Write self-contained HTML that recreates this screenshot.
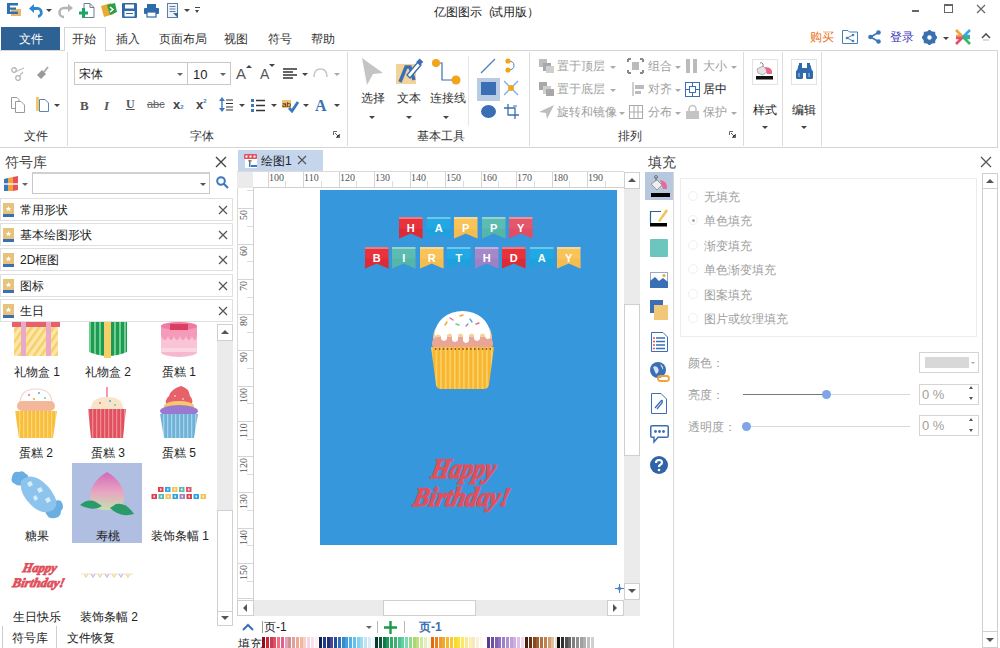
<!DOCTYPE html>
<html><head><meta charset="utf-8">
<style>
*{margin:0;padding:0;box-sizing:border-box}
html,body{width:1000px;height:648px;overflow:hidden;background:#fff;font-family:"Liberation Sans",sans-serif;font-size:12px;color:#333}
.a{position:absolute}
.t{position:absolute;white-space:nowrap;line-height:1}
.vl{position:absolute;width:1px;background:#dcdcdc}
.hl{position:absolute;height:1px;background:#dcdcdc}
.g{color:#a0a0a0}
.arr{position:absolute;width:0;height:0;border-left:3px solid transparent;border-right:3px solid transparent;border-top:3px solid #444}
.arrg{position:absolute;width:0;height:0;border-left:3px solid transparent;border-right:3px solid transparent;border-top:3px solid #aaa}
svg{position:absolute;overflow:visible}
</style></head><body>

<!-- ===== TITLE BAR ===== -->
<!-- app logo -->
<svg style="left:6px;top:3px" width="16" height="13" viewBox="0 0 16 13">
<rect x="5" y="6" width="10" height="7" fill="#eab66a"/>
<rect x="1" y="0" width="11" height="2.5" fill="#2f6fb5"/>
<rect x="1" y="0" width="3" height="11" fill="#2f6fb5"/>
<rect x="1" y="4.5" width="9" height="2.2" fill="#2f6fb5"/>
<rect x="1" y="8.6" width="11" height="2.4" fill="#2f6fb5"/>
</svg>
<!-- undo -->
<svg style="left:29px;top:4px" width="14" height="13" viewBox="0 0 14 13">
<path d="M2 4.5 H7.5 A4 4 0 0 1 9 12.5" fill="none" stroke="#2c86d0" stroke-width="2.8"/>
<path d="M0 4.5 L5 0 L5 9 Z" fill="#2c86d0"/>
</svg>
<div class="arr" style="left:46px;top:9px"></div>
<!-- redo -->
<svg style="left:58px;top:4px" width="15" height="13" viewBox="0 0 15 13">
<path d="M12 4 H6 A4.5 4.5 0 0 0 6 13" fill="none" stroke="#b5b5b5" stroke-width="2.6"/>
<path d="M15 4 L10 0 L10 8 Z" fill="#b5b5b5"/>
</svg>
<!-- new -->
<svg style="left:79px;top:3px" width="16" height="15" viewBox="0 0 16 15">
<path d="M5 .5 H11 L15 4.5 V14.5 H5 Z" fill="#fff" stroke="#6d7f8f" stroke-width="1"/>
<path d="M11 .5 V4.5 H15" fill="none" stroke="#6d7f8f"/>
<rect x="3" y="5" width="3" height="10" fill="#1aa664"/>
<rect x="0" y="8.5" width="9" height="3" fill="#1aa664"/>
</svg>
<!-- open -->
<svg style="left:101px;top:3px" width="16" height="14" viewBox="0 0 16 14">
<path d="M0 3 L10 0 L13 11 L3 14 Z" fill="#e8a935"/>
<path d="M6 2 L14 0 L16 9 L9 12 Z" fill="#2aa04a"/>
<path d="M9 4 L12 6.5 L9 9" fill="none" stroke="#fff" stroke-width="1.5"/>
</svg>
<!-- save -->
<svg style="left:122px;top:3px" width="15" height="15" viewBox="0 0 15 15">
<rect x="0" y="0" width="15" height="15" rx="1" fill="#2f6aaa"/>
<rect x="3" y="1.5" width="9" height="4" fill="#fff"/>
<rect x="2.5" y="8" width="10" height="5.5" fill="#fff"/>
<rect x="4" y="10" width="7" height="1" fill="#2f6aaa"/>
</svg>
<!-- print -->
<svg style="left:144px;top:4px" width="15" height="13" viewBox="0 0 15 13">
<rect x="3" y="0" width="9" height="4" fill="#2f6aaa"/>
<rect x="0" y="4" width="15" height="6" rx="1" fill="#2f6aaa"/>
<rect x="3" y="8" width="9" height="5" fill="#fff" stroke="#2f6aaa" stroke-width="1.2"/>
</svg>
<!-- doc -->
<svg style="left:167px;top:3px" width="12" height="15" viewBox="0 0 12 15">
<rect x=".5" y=".5" width="10" height="14" fill="#eef3f9" stroke="#5c7fa5"/>
<rect x="2.5" y="3" width="6" height="1" fill="#5c7fa5"/>
<rect x="2.5" y="5.5" width="6" height="1" fill="#5c7fa5"/>
<rect x="2.5" y="8" width="6" height="1" fill="#5c7fa5"/>
<path d="M6 10 L11 10 L11 15 Z" fill="#2f6aaa"/>
</svg>
<div class="arr" style="left:184px;top:9px"></div>
<div class="a" style="left:195px;top:7px;width:5px;height:1px;background:#444"></div>
<div class="arr" style="left:195px;top:10px;border-left-width:2.5px;border-right-width:2.5px"></div>

<div class="t" style="left:434px;top:6px;font-size:12px;color:#222">亿图图示<span style="letter-spacing:-3px">（</span>试用版<span style="letter-spacing:-3px">）</span></div>
<div class="a" style="left:912px;top:10px;width:7px;height:2px;background:#666"></div>
<div class="a" style="left:944px;top:4px;width:9px;height:9px;border:1px solid #666;border-top-width:2px"></div>
<svg style="left:977px;top:5px" width="8" height="8" viewBox="0 0 8 8"><path d="M0 0 L8 8 M8 0 L0 8" stroke="#666" stroke-width="1.2"/></svg>

<!-- ===== TAB ROW ===== -->
<div class="a" style="left:1px;top:27px;width:59px;height:23px;background:#2f6294"></div>
<div class="t" style="left:19px;top:33px;color:#fff">文件</div>
<div class="a" style="left:64px;top:27px;width:42px;height:24px;background:#fff;border:1px solid #d5d5d5;border-bottom:none;z-index:2"></div>
<div class="t" style="left:72px;top:33px;color:#333;z-index:3">开始</div>
<div class="t" style="left:116px;top:33px">插入</div>
<div class="t" style="left:159px;top:33px">页面布局</div>
<div class="t" style="left:224px;top:33px">视图</div>
<div class="t" style="left:268px;top:33px">符号</div>
<div class="t" style="left:311px;top:33px">帮助</div>
<div class="t" style="left:810px;top:31px;color:#e8741a">购买</div>
<svg style="left:842px;top:30px" width="16" height="14" viewBox="0 0 16 14">
<path d="M.5 .5 H6 L7.5 2 H15.5 V13.5 H.5 Z" fill="none" stroke="#4a7fb5"/>
<circle cx="5" cy="8" r="1.3" fill="#4a7fb5"/><circle cx="11" cy="5" r="1.3" fill="#4a7fb5"/><circle cx="11" cy="11" r="1.3" fill="#4a7fb5"/>
<path d="M5 8 L11 5 M5 8 L11 11" stroke="#4a7fb5"/>
</svg>
<svg style="left:868px;top:30px" width="13" height="14" viewBox="0 0 13 14">
<circle cx="2.5" cy="7" r="2.3" fill="#3a78b8"/><circle cx="10.5" cy="2.5" r="2.3" fill="#3a78b8"/><circle cx="10.5" cy="11.5" r="2.3" fill="#3a78b8"/>
<path d="M2.5 7 L10.5 2.5 M2.5 7 L10.5 11.5" stroke="#3a78b8" stroke-width="1.6"/>
</svg>
<div class="t" style="left:890px;top:31px;color:#3b3bb5">登录</div>
<svg style="left:922px;top:30px" width="15" height="15" viewBox="0 0 15 15">
<circle cx="7.5" cy="7.5" r="5" fill="none" stroke="#3a6fb0" stroke-width="3.5"/>
<path d="M7.5 0 V15 M0 7.5 H15 M2.2 2.2 L12.8 12.8 M12.8 2.2 L2.2 12.8" stroke="#3a6fb0" stroke-width="2.4"/>
<circle cx="7.5" cy="7.5" r="2.2" fill="#fff"/>
</svg>
<div class="arr" style="left:943px;top:37px"></div>
<svg style="left:955px;top:29px" width="16" height="16" viewBox="0 0 16 16">
<path d="M1 1 L7 7 L1 7" fill="none" stroke="#f2a33a" stroke-width="2.6"/>
<path d="M15 1 L9 7 L15 7" fill="none" stroke="#3aa7e0" stroke-width="2.6"/>
<path d="M1 15 L7 9 L1 9" fill="none" stroke="#e84c6a" stroke-width="2.6"/>
<path d="M15 15 L9 9 L15 9" fill="none" stroke="#3cb371" stroke-width="2.6"/>
</svg>
<svg style="left:981px;top:33px" width="10" height="8" viewBox="0 0 10 8">
<path d="M1 5 L5 1 L9 5" fill="none" stroke="#555" stroke-width="1.6"/><path d="M2 7 L8 7" stroke="#bbb"/>
</svg>
<!-- ===== RIBBON ===== -->
<div class="a" style="left:0;top:50px;width:998px;height:98px;background:#fff;border:1px solid #d5d5d5;border-left:none"></div>
<div class="vl" style="left:67px;top:52px;height:94px"></div>
<div class="vl" style="left:347px;top:52px;height:94px"></div>
<div class="vl" style="left:529px;top:52px;height:94px"></div>
<div class="vl" style="left:743px;top:52px;height:94px"></div>
<div class="vl" style="left:782px;top:52px;height:94px"></div>
<div class="vl" style="left:821px;top:52px;height:94px"></div>
<div class="vl" style="left:468px;top:56px;height:70px;background:#e6e6e6"></div>
<div class="t" style="left:24px;top:130px">文件</div>
<div class="t" style="left:190px;top:130px">字体</div>
<div class="t" style="left:417px;top:130px">基本工具</div>
<div class="t" style="left:618px;top:130px">排列</div>
<!-- launchers -->
<svg style="left:333px;top:131px" width="7" height="7" viewBox="0 0 7 7"><path d="M.5 .5 H4 M.5 .5 V4" stroke="#666"/><path d="M2 2 L6.5 6.5 M3 6.5 H6.5 V3" stroke="#666"/></svg>
<svg style="left:729px;top:131px" width="7" height="7" viewBox="0 0 7 7"><path d="M.5 .5 H4 M.5 .5 V4" stroke="#666"/><path d="M2 2 L6.5 6.5 M3 6.5 H6.5 V3" stroke="#666"/></svg>

<!-- file group icons -->
<svg style="left:11px;top:67px" width="15" height="14" viewBox="0 0 15 14">
<circle cx="3" cy="3" r="2.3" fill="none" stroke="#b0b0b0" stroke-width="1.2"/>
<circle cx="7" cy="11" r="2.3" fill="none" stroke="#b0b0b0" stroke-width="1.2"/>
<path d="M5 4.5 L13 1 M8.5 9 L12 5" stroke="#c0c0c0" stroke-width="1.3"/>
</svg>
<svg style="left:35px;top:67px" width="14" height="13" viewBox="0 0 14 13">
<path d="M9 5 L13 0" stroke="#aaa" stroke-width="2"/><path d="M2 8 L7 3 L11 7 L6 12 Z" fill="#999"/>
</svg>
<svg style="left:11px;top:97px" width="15" height="16" viewBox="0 0 15 16">
<path d="M.5 .5 H6 L8 2.5 V11.5 H.5 Z" fill="#fff" stroke="#9a9a9a"/>
<path d="M4.5 4.5 H10 L13.5 8 V15.5 H4.5 Z" fill="#fff" stroke="#9a9a9a"/>
</svg>
<svg style="left:36px;top:96px" width="14" height="16" viewBox="0 0 14 16">
<rect x="0" y="1" width="3" height="14" fill="#f0c870"/>
<path d="M3.5 3.5 H9 L12.5 7 V15.5 H3.5 Z" fill="#fff" stroke="#5c84b5"/>
</svg>
<div class="arr" style="left:54px;top:104px"></div>

<!-- font group -->
<div class="a" style="left:74px;top:62px;width:157px;height:23px;border:1px solid #c8c8c8;background:#fff"></div>
<div class="vl" style="left:187px;top:62px;height:23px;background:#c8c8c8"></div>
<div class="t" style="left:79px;top:68px;color:#222">宋体</div>
<div class="t" style="left:193px;top:68px;color:#222;font-size:13px">10</div>
<div class="arr" style="left:177px;top:73px;border-top-color:#666"></div>
<div class="arr" style="left:220px;top:73px;border-top-color:#666"></div>
<div class="t" style="left:236px;top:66px;font-size:15px;color:#555">A</div>
<div class="arr" style="left:246px;top:65px;border-top:none;border-bottom:3px solid #444"></div>
<div class="t" style="left:260px;top:67px;font-size:14px;color:#555">A</div>
<div class="arr" style="left:269px;top:64px"></div>
<svg style="left:283px;top:68px" width="14" height="12" viewBox="0 0 14 12">
<path d="M0 1 H14 M0 4 H10 M0 7 H14 M0 10 H10" stroke="#333" stroke-width="1.3"/>
</svg>
<div class="arr" style="left:302px;top:73px"></div>
<svg style="left:313px;top:68px" width="15" height="10" viewBox="0 0 15 10">
<path d="M1 9 Q1 1 7.5 1 Q14 1 14 9" fill="none" stroke="#c8c8c8" stroke-width="1.6"/>
</svg>
<div class="arrg" style="left:334px;top:73px"></div>
<!-- row 2 -->
<div class="t" style="left:80px;top:98px;font:bold 13px 'Liberation Serif',serif;color:#555">B</div>
<div class="t" style="left:104px;top:98px;font:italic bold 13px 'Liberation Serif',serif;color:#555">I</div>
<div class="t" style="left:126px;top:97px;font:bold 12px 'Liberation Serif',serif;color:#555;text-decoration:underline">U</div>
<div class="t" style="left:147px;top:99px;font-size:11px;color:#666;text-decoration:line-through">abc</div>
<div class="t" style="left:173px;top:98px;font-size:13px;font-weight:bold;color:#444">x<span style="font-size:6px;color:#4a7fb5">2</span></div>
<div class="t" style="left:196px;top:98px;font-size:13px;font-weight:bold;color:#444">x<span style="font-size:6px;vertical-align:6px;color:#4a7fb5">2</span></div>
<svg style="left:219px;top:97px" width="14" height="15" viewBox="0 0 14 15">
<path d="M3 2 V13" stroke="#3a78c0" stroke-width="1.4"/><path d="M0 4 L3 0 L6 4 Z M0 11 L3 15 L6 11 Z" fill="#3a78c0"/>
<path d="M7 3 H14 M7 6.5 H14 M7 10 H14 M7 13 H14" stroke="#333" stroke-width="1.2"/>
</svg>
<div class="arr" style="left:239px;top:104px"></div>
<svg style="left:251px;top:99px" width="14" height="13" viewBox="0 0 14 13">
<rect x="0" y="0" width="3" height="3" fill="#3a78c0"/><rect x="0" y="5" width="3" height="3" fill="#3a78c0"/><rect x="0" y="10" width="3" height="3" fill="#3a78c0"/>
<path d="M5 1.5 H14 M5 6.5 H14 M5 11.5 H14" stroke="#333" stroke-width="1.3"/>
</svg>
<div class="arr" style="left:271px;top:104px"></div>
<svg style="left:282px;top:99px" width="16" height="13" viewBox="0 0 16 13">
<rect x="0" y="1" width="9" height="8" fill="#f5c36a"/>
<text x="0" y="8" font-size="8" font-family="Liberation Sans" fill="#222">ab</text>
<path d="M7 9 L10 12 L16 3" fill="none" stroke="#3a78c0" stroke-width="2.8"/>
</svg>
<div class="arr" style="left:303px;top:104px"></div>
<div class="t" style="left:315px;top:97px;font:bold 16px 'Liberation Serif',serif;color:#3a6fb5">A</div>
<div class="arr" style="left:334px;top:104px"></div>

<!-- basic tools -->
<svg style="left:361px;top:58px" width="23" height="28" viewBox="0 0 23 28">
<path d="M1 0 L22 15 L12 16 L6 27 Z" fill="#c4c4c4"/>
</svg>
<div class="t" style="left:361px;top:92px">选择</div>
<div class="arr" style="left:369px;top:116px"></div>
<svg style="left:396px;top:59px" width="26" height="26" viewBox="0 0 26 26">
<rect x="0" y="5" width="20" height="20" fill="#f2d49a"/>
<path d="M4 23 L10 8 L14 8 L18 21" fill="none" stroke="#3a6fb5" stroke-width="3.5"/>
<path d="M11 16 L22 3 L25 6 L14 19 Z" fill="#fff" stroke="#3a6fb5" stroke-width="1.4"/>
<rect x="21" y="0" width="5" height="5" transform="rotate(45 23 3)" fill="#3a6fb5"/>
</svg>
<div class="t" style="left:397px;top:92px">文本</div>
<div class="arr" style="left:406px;top:116px"></div>
<svg style="left:432px;top:59px" width="29" height="26" viewBox="0 0 29 26">
<path d="M4 4 H10 V21 H24" fill="none" stroke="#3a6fb5" stroke-width="1.2"/>
<circle cx="4" cy="4" r="4" fill="#f2a51a"/><circle cx="24" cy="21" r="4.5" fill="#f2a51a"/>
</svg>
<div class="t" style="left:430px;top:92px">连接线</div>
<div class="arr" style="left:443px;top:116px"></div>
<svg style="left:480px;top:58px" width="16" height="16" viewBox="0 0 16 16"><path d="M1 15 L15 1" stroke="#4a7fc0" stroke-width="1.3"/></svg>
<svg style="left:505px;top:58px" width="11" height="15" viewBox="0 0 11 15">
<path d="M3 3 Q9 3 9 7.5 Q9 12 3 12" fill="none" stroke="#4a7fc0" stroke-width="1"/>
<circle cx="3" cy="3" r="2.6" fill="#f2a51a"/><circle cx="3" cy="12" r="2.6" fill="#f2a51a"/>
</svg>
<div class="a" style="left:477px;top:78px;width:23px;height:23px;background:#b9cce3"></div>
<div class="a" style="left:481px;top:82px;width:15px;height:13px;background:#3a6fb5"></div>
<svg style="left:503px;top:80px" width="16" height="16" viewBox="0 0 16 16">
<path d="M1 1 L15 15 M15 1 L1 15" stroke="#7ab0e0" stroke-width="1.3"/><circle cx="8" cy="8" r="3" fill="#f2a51a"/>
</svg>
<div class="a" style="left:481px;top:105px;width:15px;height:13px;border-radius:50%;background:#3a6fb5"></div>
<svg style="left:504px;top:104px" width="15" height="15" viewBox="0 0 15 15">
<path d="M4 0 V11 H15 M0 4 H11 V15" fill="none" stroke="#3a6fb5" stroke-width="1.3"/>
<path d="M9 2 L13 2" stroke="#3a6fb5"/>
</svg>

<!-- arrange group -->
<svg style="left:539px;top:59px" width="15" height="14" viewBox="0 0 15 14">
<rect x="0" y="0" width="8" height="8" fill="#bdbdbd"/><rect x="4" y="4" width="8" height="8" fill="#a8a8a8"/><rect x="7" y="7" width="8" height="7" fill="#cfcfcf"/>
</svg>
<div class="t g" style="left:557px;top:60px">置于顶层</div><div class="arrg" style="left:610px;top:66px"></div>
<svg style="left:539px;top:82px" width="15" height="14" viewBox="0 0 15 14">
<rect x="0" y="0" width="8" height="8" fill="#a8a8a8"/><rect x="4" y="4" width="8" height="8" fill="#cfcfcf"/><rect x="7" y="7" width="8" height="7" fill="#a8a8a8"/>
</svg>
<div class="t g" style="left:557px;top:83px">置于底层</div><div class="arrg" style="left:610px;top:89px"></div>
<svg style="left:539px;top:105px" width="15" height="14" viewBox="0 0 15 14"><path d="M0 7 L15 0 L8 14 L7 8 Z" fill="#bdbdbd"/></svg>
<div class="t g" style="left:557px;top:106px">旋转和镜像</div><div class="arrg" style="left:619px;top:112px"></div>
<svg style="left:628px;top:59px" width="15" height="14" viewBox="0 0 15 14">
<rect x="4" y="3" width="7" height="8" fill="#bbb"/>
<path d="M0 0 H3 M0 0 V3 M15 0 H12 M15 0 V3 M0 14 H3 M0 14 V11 M15 14 H12 M15 14 V11" stroke="#888" stroke-width="2"/>
</svg>
<div class="t g" style="left:648px;top:60px">组合</div><div class="arrg" style="left:675px;top:66px"></div>
<svg style="left:632px;top:82px" width="12" height="14" viewBox="0 0 12 14"><path d="M1 0 V14" stroke="#bbb" stroke-width="1.4"/><rect x="3" y="3" width="9" height="4" fill="#bbb"/><rect x="3" y="9" width="6" height="3" fill="#bbb"/></svg>
<div class="t g" style="left:648px;top:83px">对齐</div><div class="arrg" style="left:675px;top:89px"></div>
<svg style="left:629px;top:105px" width="14" height="14" viewBox="0 0 14 14"><rect x=".5" y=".5" width="13" height="13" fill="none" stroke="#aaa"/><path d="M5 0 V14 M9 0 V14 M0 7 H14" stroke="#aaa"/></svg>
<div class="t g" style="left:648px;top:106px">分布</div><div class="arrg" style="left:675px;top:112px"></div>
<svg style="left:686px;top:59px" width="12" height="14" viewBox="0 0 12 14"><rect x="0" y="0" width="4" height="14" fill="#bbb"/><rect x="7" y="0" width="4" height="14" fill="#bbb"/></svg>
<div class="t g" style="left:703px;top:60px">大小</div><div class="arrg" style="left:731px;top:66px"></div>
<svg style="left:685px;top:82px" width="15" height="15" viewBox="0 0 15 15"><rect x=".5" y=".5" width="14" height="14" fill="none" stroke="#3a6fb5"/><rect x="4.5" y="4.5" width="6" height="6" fill="none" stroke="#3a6fb5"/><path d="M7.5 0 V4 M7.5 11 V15 M0 7.5 H4 M11 7.5 H15" stroke="#3a6fb5"/></svg>
<div class="t" style="left:703px;top:83px;color:#222">居中</div>
<svg style="left:686px;top:105px" width="13" height="14" viewBox="0 0 13 14"><path d="M3 7 V4 A3.5 3.5 0 0 1 10 4 V7" fill="none" stroke="#c4c4c4" stroke-width="1.6"/><rect x="0" y="6" width="13" height="8" fill="#c4c4c4"/></svg>
<div class="t g" style="left:703px;top:106px">保护</div><div class="arrg" style="left:731px;top:112px"></div>

<!-- style / edit -->
<div class="a" style="left:752px;top:59px;width:26px;height:26px;border:1px solid #e2e2e2;background:#fff"></div>
<svg style="left:755px;top:63px" width="20" height="17" viewBox="0 0 20 17">
<path d="M5 0 Q7 -1 8 1 L8 4" fill="none" stroke="#888" stroke-width="1"/>
<path d="M2 6 L8 3 L13 8 L8 12 L3 10 Z" fill="#e4e4e4" stroke="#999" stroke-width=".8"/>
<path d="M10 4 Q18 4 17 11 L12 11 Z" fill="#e86a8a"/>
<rect x="1" y="13" width="17" height="3.5" fill="#111"/>
</svg>
<div class="t" style="left:753px;top:104px;color:#222">样式</div>
<div class="arr" style="left:762px;top:126px"></div>
<div class="a" style="left:791px;top:59px;width:26px;height:26px;border:1px solid #e2e2e2;background:#fff"></div>
<svg style="left:796px;top:63px" width="17" height="16" viewBox="0 0 17 16">
<path d="M1 8 L2.5 2 H6 V8 Z M11 8 V2 H14.5 L16 8 Z" fill="#2f6aaa"/>
<rect x="0" y="7" width="7" height="9" rx="1.5" fill="#2f6aaa"/><rect x="10" y="7" width="7" height="9" rx="1.5" fill="#2f6aaa"/>
<rect x="6" y="5" width="5" height="5" fill="#2f6aaa"/>
<rect x="2" y="10" width="2" height="4" fill="#6a9ad0"/><rect x="12" y="10" width="2" height="4" fill="#6a9ad0"/>
<rect x="3" y="0" width="3" height="2" fill="#2f6aaa"/><rect x="11" y="0" width="3" height="2" fill="#2f6aaa"/>
</svg>
<div class="t" style="left:792px;top:104px;color:#222">编辑</div>
<div class="arr" style="left:801px;top:126px"></div>
<!-- ===== LEFT PANEL ===== -->
<div class="t" style="left:5px;top:155px;font-size:14px;color:#444">符号库</div>
<svg style="left:216px;top:157px" width="10" height="10" viewBox="0 0 10 10"><path d="M0 0 L10 10 M10 0 L0 10" stroke="#444" stroke-width="1.4"/></svg>
<svg style="left:4px;top:176px" width="14" height="15" viewBox="0 0 14 15">
<path d="M0 3 L4 2 V15 L0 15 Z" fill="#3a78c0"/><path d="M4 2 L9 1 V15 H4 Z" fill="#f2a33a"/><path d="M9 1 L14 0 V14 L9 15 Z" fill="#e8505a"/>
<rect x="0" y="7" width="14" height="2" fill="#fff" opacity=".7"/>
</svg>
<div class="arr" style="left:22px;top:183px;border-top-color:#666"></div>
<div class="a" style="left:32px;top:172px;width:178px;height:22px;border:1px solid #c8c8c8;border-top:2px solid #d0d0d0;background:#fff"></div>
<div class="arr" style="left:200px;top:183px;border-top-color:#555"></div>
<svg style="left:216px;top:176px" width="13" height="13" viewBox="0 0 13 13"><circle cx="5" cy="5" r="3.8" fill="none" stroke="#3a78c0" stroke-width="2"/><path d="M8 8 L12 12" stroke="#3a78c0" stroke-width="2.2"/></svg>

<!-- categories -->
<div class="a" style="left:0;top:198px;width:233px;height:23px;border:1px solid #e0e0e0;background:#fff"></div>
<div class="a" style="left:0;top:223px;width:233px;height:23px;border:1px solid #e0e0e0;background:#fff"></div>
<div class="a" style="left:0;top:248px;width:233px;height:23px;border:1px solid #e0e0e0;background:#fff"></div>
<div class="a" style="left:0;top:274px;width:233px;height:23px;border:1px solid #e0e0e0;background:#fff"></div>
<div class="a" style="left:0;top:299px;width:233px;height:23px;border:1px solid #e0e0e0;background:#fff"></div>

<svg style="left:3px;top:203px" width="12" height="14" viewBox="0 0 12 14"><rect x="0" y="0" width="11" height="11" fill="#e6c27a"/><rect x="0" y="11" width="11" height="3" fill="#3a6fb5"/><path d="M5.5 3 L6.3 5 L8.3 5 L6.7 6.2 L7.3 8.2 L5.5 7 L3.7 8.2 L4.3 6.2 L2.7 5 L4.7 5 Z" fill="#fff"/></svg>
<svg style="left:3px;top:228px" width="12" height="14" viewBox="0 0 12 14"><rect x="0" y="0" width="11" height="11" fill="#e6c27a"/><rect x="0" y="11" width="11" height="3" fill="#3a6fb5"/><path d="M5.5 3 L6.3 5 L8.3 5 L6.7 6.2 L7.3 8.2 L5.5 7 L3.7 8.2 L4.3 6.2 L2.7 5 L4.7 5 Z" fill="#fff"/></svg>
<svg style="left:3px;top:253px" width="12" height="14" viewBox="0 0 12 14"><rect x="0" y="0" width="11" height="11" fill="#e6c27a"/><rect x="0" y="11" width="11" height="3" fill="#3a6fb5"/><path d="M5.5 3 L6.3 5 L8.3 5 L6.7 6.2 L7.3 8.2 L5.5 7 L3.7 8.2 L4.3 6.2 L2.7 5 L4.7 5 Z" fill="#fff"/></svg>
<svg style="left:3px;top:279px" width="12" height="14" viewBox="0 0 12 14"><rect x="0" y="0" width="11" height="11" fill="#e6c27a"/><rect x="0" y="11" width="11" height="3" fill="#3a6fb5"/><path d="M5.5 3 L6.3 5 L8.3 5 L6.7 6.2 L7.3 8.2 L5.5 7 L3.7 8.2 L4.3 6.2 L2.7 5 L4.7 5 Z" fill="#fff"/></svg>
<svg style="left:3px;top:304px" width="12" height="14" viewBox="0 0 12 14"><rect x="0" y="0" width="11" height="11" fill="#e6c27a"/><rect x="0" y="11" width="11" height="3" fill="#3a6fb5"/><path d="M5.5 3 L6.3 5 L8.3 5 L6.7 6.2 L7.3 8.2 L5.5 7 L3.7 8.2 L4.3 6.2 L2.7 5 L4.7 5 Z" fill="#fff"/></svg>

<div class="t" style="left:20px;top:204px;color:#222">常用形状</div>
<div class="t" style="left:20px;top:229px;color:#222">基本绘图形状</div>
<div class="t" style="left:20px;top:254px;color:#222">2D框图</div>
<div class="t" style="left:20px;top:280px;color:#222">图标</div>
<div class="t" style="left:20px;top:305px;color:#222">生日</div>
<svg style="left:219px;top:206px" width="8" height="8" viewBox="0 0 8 8"><path d="M0 0 L8 8 M8 0 L0 8" stroke="#555" stroke-width="1.2"/></svg>
<svg style="left:219px;top:231px" width="8" height="8" viewBox="0 0 8 8"><path d="M0 0 L8 8 M8 0 L0 8" stroke="#555" stroke-width="1.2"/></svg>
<svg style="left:219px;top:256px" width="8" height="8" viewBox="0 0 8 8"><path d="M0 0 L8 8 M8 0 L0 8" stroke="#555" stroke-width="1.2"/></svg>
<svg style="left:219px;top:282px" width="8" height="8" viewBox="0 0 8 8"><path d="M0 0 L8 8 M8 0 L0 8" stroke="#555" stroke-width="1.2"/></svg>
<svg style="left:219px;top:307px" width="8" height="8" viewBox="0 0 8 8"><path d="M0 0 L8 8 M8 0 L0 8" stroke="#555" stroke-width="1.2"/></svg>

<!-- left scrollbar -->
<div class="a" style="left:217px;top:324px;width:16px;height:302px;background:#ebebeb"></div>
<div class="a" style="left:217px;top:324px;width:16px;height:17px;background:#fff;border:1px solid #d0d0d0"></div>
<div class="arr" style="left:221px;top:330px;border-left-width:4px;border-right-width:4px;border-top:none;border-bottom:4px solid #555"></div>
<div class="a" style="left:217px;top:510px;width:16px;height:102px;background:#fff;border:1px solid #d0d0d0"></div>
<div class="a" style="left:217px;top:611px;width:16px;height:15px;background:#fff;border:1px solid #d0d0d0"></div>
<div class="arr" style="left:221px;top:616px;border-left-width:4px;border-right-width:4px;border-top-width:4px;border-top-color:#555"></div>

<!-- gallery -->
<div class="a" style="left:72px;top:463px;width:70px;height:80px;background:#b0bee1"></div>

<!-- gift 1 -->
<svg style="left:12px;top:322px" width="48" height="34" viewBox="0 0 48 34">
<defs><pattern id="st1" width="6" height="6" patternUnits="userSpaceOnUse" patternTransform="rotate(35)"><rect width="6" height="6" fill="#fde7a8"/><rect width="2.5" height="6" fill="#f5cf6a"/></pattern></defs>
<rect x="2" y="4" width="44" height="30" fill="url(#st1)"/>
<rect x="0" y="0" width="48" height="5" fill="#e8606a"/>
<rect x="9" y="0" width="5" height="34" fill="#e9a9c8"/><rect x="34" y="0" width="5" height="34" fill="#e9a9c8"/>
</svg>
<!-- gift 2 -->
<svg style="left:89px;top:322px" width="38" height="36" viewBox="0 0 38 36">
<defs><pattern id="st2" width="5" height="5" patternUnits="userSpaceOnUse"><rect width="5" height="5" fill="#1f9a55"/><rect width="2" height="5" fill="#6fcf8e"/></pattern></defs>
<path d="M0 0 H38 V30 Q19 38 0 30 Z" fill="url(#st2)"/>
<rect x="15" y="0" width="7" height="36" fill="#f5cf6a"/>
</svg>
<!-- cake 1 -->
<svg style="left:160px;top:322px" width="38" height="36" viewBox="0 0 38 36">
<ellipse cx="19" cy="30" rx="18" ry="5" fill="#f6b8cf"/>
<rect x="1" y="4" width="36" height="26" fill="#f59ab8"/>
<path d="M1 14 Q5 22 8 14 Q11 22 14 14 Q17 22 20 14 Q23 22 26 14 Q29 22 32 14 Q35 22 37 14 V30 H1 Z" fill="#f8c4d6"/>
<ellipse cx="19" cy="4" rx="18" ry="4" fill="#f07aa3"/>
<rect x="10" y="2" width="18" height="6" fill="#d9405f"/>
<rect x="1" y="26" width="36" height="4" fill="#fbd5e2"/>
</svg>
<div class="t" style="left:14px;top:366px;color:#222">礼物盒 1</div>
<div class="t" style="left:85px;top:366px;color:#222">礼物盒 2</div>
<div class="t" style="left:162px;top:366px;color:#222">蛋糕 1</div>

<!-- cupcakes row -->
<svg style="left:15px;top:387px" width="42" height="52" viewBox="0 0 42 52">
<defs><pattern id="cy" width="4" height="10" patternUnits="userSpaceOnUse"><rect width="4" height="10" fill="#f9be3a"/><rect width="1.3" height="10" fill="#fcd67a"/></pattern></defs>
<path d="M5 17 Q5 2 21 2 Q37 2 37 17 Z" fill="#fff" stroke="#f0d8c8" stroke-width="1.2"/>
<rect x="2" y="14" width="38" height="10" rx="5" fill="#f3b89a"/>
<path d="M0 24 H42 L38 51 H4 Z" fill="url(#cy)"/>
<circle cx="14" cy="8" r="1" fill="#e86a8a"/><circle cx="24" cy="6" r="1" fill="#4ab0e0"/><circle cx="30" cy="11" r="1" fill="#6fcf8e"/><circle cx="19" cy="12" r="1" fill="#f2a33a"/>
</svg>
<svg style="left:88px;top:387px" width="38" height="52" viewBox="0 0 38 52">
<defs><pattern id="cr" width="4" height="10" patternUnits="userSpaceOnUse"><rect width="4" height="10" fill="#e0505e"/><rect width="1.3" height="10" fill="#ee8a94"/></pattern></defs>
<rect x="18" y="0" width="2" height="12" fill="#f39ab8"/>
<path d="M3 22 Q3 10 19 10 Q35 10 35 22 Z" fill="#f8e4c8"/>
<path d="M0 22 H38 L35 51 H3 Z" fill="url(#cr)"/>
<circle cx="12" cy="16" r="1" fill="#e86a8a"/><circle cx="22" cy="14" r="1" fill="#4ab0e0"/><circle cx="27" cy="18" r="1" fill="#6fcf8e"/>
</svg>
<svg style="left:159px;top:386px" width="40" height="53" viewBox="0 0 40 53">
<defs><pattern id="cb" width="4" height="10" patternUnits="userSpaceOnUse"><rect width="4" height="10" fill="#6fb2d8"/><rect width="1.3" height="10" fill="#a8d2ea"/></pattern></defs>
<path d="M22 0 Q30 2 31 10 Q35 14 32 20 H8 Q5 14 10 10 Q12 3 22 0 Z" fill="#e8606a"/><circle cx="16" cy="10" r=".8" fill="#fff"/><circle cx="24" cy="13" r=".8" fill="#fff"/>
<ellipse cx="20" cy="20" rx="15" ry="5" fill="#f5c870"/>
<ellipse cx="20" cy="25" rx="19" ry="6" fill="#9a7ad0"/>
<path d="M1 28 H39 L35 52 H5 Z" fill="url(#cb)"/>
</svg>
<div class="t" style="left:19px;top:447px;color:#222">蛋糕 2</div>
<div class="t" style="left:91px;top:447px;color:#222">蛋糕 3</div>
<div class="t" style="left:162px;top:447px;color:#222">蛋糕 5</div>

<!-- candy -->
<svg style="left:9px;top:471px" width="55" height="48" viewBox="0 0 55 48">
<path d="M3 6 Q4 0 10 1 Q14 -1 17 3 Q20 4 19 8 L15 13 Q10 16 6 13 Q1 11 3 6 Z" fill="#6aaee2"/>
<path d="M52 30 Q56 36 52 40 Q52 46 46 47 Q40 48 38 44 Q35 41 38 37 L42 32 Q47 28 52 30 Z" fill="#6aaee2"/>
<path d="M12 10 Q20 2 30 8 Q40 14 46 26 Q50 36 42 40 Q32 44 22 34 Q10 22 12 10 Z" fill="#8cc4ee"/>
<path d="M18 12 L22 10 L24 14 L20 16 Z M28 18 L32 16 L34 20 L30 22 Z M36 28 L40 26 L42 30 L38 32 Z M24 26 L27 24 L29 28 L26 30 Z" fill="#d8ecfa"/>
</svg>
<!-- peach -->
<svg style="left:80px;top:472px" width="54" height="47" viewBox="0 0 54 47">
<defs><linearGradient id="pg" x1="0" y1="0" x2="0" y2="1"><stop offset="0" stop-color="#d36ab8"/><stop offset=".55" stop-color="#e8a8c0"/><stop offset="1" stop-color="#c4e0b0"/></linearGradient></defs>
<path d="M27 0 Q44 10 44 26 Q44 38 27 38 Q10 38 10 26 Q10 10 27 0 Z" fill="url(#pg)"/>
<path d="M0 33 Q8 26 16 30 L22 34 Q14 40 0 33 Z" fill="#2a9a6a"/>
<path d="M54 42 Q46 30 36 32 L30 36 Q40 46 54 42 Z" fill="#2a9a6a"/>
</svg>
<!-- banner 1 -->
<svg style="left:151px;top:487px" width="54" height="13" viewBox="0 0 54 13">
<rect x="7" y="0" width="5.5" height="5" fill="#e0404a"/><rect x="9" y="1.5" width="1.5" height="2" fill="#fff" opacity=".9"/>
<rect x="14" y="0" width="5.5" height="5" fill="#2aa6e0"/><rect x="16" y="1.5" width="1.5" height="2" fill="#fff" opacity=".9"/>
<rect x="21" y="0" width="5.5" height="5" fill="#f5c35a"/><rect x="23" y="1.5" width="1.5" height="2" fill="#fff" opacity=".9"/>
<rect x="28" y="0" width="5.5" height="5" fill="#5bbcb0"/><rect x="30" y="1.5" width="1.5" height="2" fill="#fff" opacity=".9"/>
<rect x="35" y="0" width="5.5" height="5" fill="#e0556a"/><rect x="37" y="1.5" width="1.5" height="2" fill="#fff" opacity=".9"/>
<rect x="0.5" y="7" width="5.5" height="5" fill="#e0404a"/><rect x="2.5" y="8.5" width="1.5" height="2" fill="#fff" opacity=".9"/>
<rect x="7.5" y="7" width="5.5" height="5" fill="#5bbcb0"/><rect x="9.5" y="8.5" width="1.5" height="2" fill="#fff" opacity=".9"/>
<rect x="14.5" y="7" width="5.5" height="5" fill="#f5c35a"/><rect x="16.5" y="8.5" width="1.5" height="2" fill="#fff" opacity=".9"/>
<rect x="21.5" y="7" width="5.5" height="5" fill="#2aa6e0"/><rect x="23.5" y="8.5" width="1.5" height="2" fill="#fff" opacity=".9"/>
<rect x="28.5" y="7" width="5.5" height="5" fill="#a184c8"/><rect x="30.5" y="8.5" width="1.5" height="2" fill="#fff" opacity=".9"/>
<rect x="35.5" y="7" width="5.5" height="5" fill="#e0404a"/><rect x="37.5" y="8.5" width="1.5" height="2" fill="#fff" opacity=".9"/>
<rect x="42.5" y="7" width="5.5" height="5" fill="#2aa6e0"/><rect x="44.5" y="8.5" width="1.5" height="2" fill="#fff" opacity=".9"/>
<rect x="49.5" y="7" width="5.5" height="5" fill="#f5c35a"/><rect x="51.5" y="8.5" width="1.5" height="2" fill="#fff" opacity=".9"/>
</svg>
<div class="t" style="left:25px;top:530px;color:#222">糖果</div>
<div class="t" style="left:96px;top:530px;color:#222">寿桃</div>
<div class="t" style="left:151px;top:530px;color:#222">装饰条幅 1</div>

<!-- happy birthday small -->
<svg style="left:9px;top:558px" width="56" height="34" viewBox="0 0 56 34">
<g transform="skewX(-12)" font-family="Liberation Serif" font-weight="bold" font-style="italic" fill="#e0505c" stroke="#e0505c" stroke-width=".8" stroke-linejoin="round">
<text x="33" y="14" text-anchor="middle" font-size="13" textLength="34" lengthAdjust="spacingAndGlyphs">Happy</text>
<text x="35" y="29" text-anchor="middle" font-size="13" textLength="52" lengthAdjust="spacingAndGlyphs">Birthday!</text>
</g></svg>
<!-- banner 2 -->
<svg style="left:81px;top:573px" width="52" height="6" viewBox="0 0 52 6">
<path d="M0 1 H52" stroke="#f0e0dc" stroke-width="1"/>
<path d="M3 1 L5 4 L7 1 M17 1 L19 4 L21 1 M31 1 L33 4 L35 1 M45 1 L47 4 L49 1" fill="none" stroke="#f5d890" stroke-width="1.3"/>
<path d="M10 1 L12 4 L14 1 M24 1 L26 4 L28 1 M38 1 L40 4 L42 1" fill="none" stroke="#c8c0e8" stroke-width="1.3"/>
</svg>
<div class="t" style="left:13px;top:611px;color:#222">生日快乐</div>
<div class="t" style="left:80px;top:611px;color:#222">装饰条幅 2</div>

<!-- bottom tabs -->
<div class="vl" style="left:2px;top:626px;height:22px;background:#cfcfcf"></div>
<div class="vl" style="left:56px;top:626px;height:22px;background:#cfcfcf"></div>
<div class="t" style="left:12px;top:632px;color:#222">符号库</div>
<div class="t" style="left:67px;top:632px;color:#222">文件恢复</div>

<!-- ===== CANVAS ===== -->
<div class="a" style="left:238px;top:150px;width:85px;height:22px;background:#c5d5ec"></div>
<svg style="left:244px;top:154px" width="14" height="14" viewBox="0 0 14 14">
<rect x="0" y="0" width="13" height="5" rx="1" fill="#e05060"/><rect x="1.5" y="1.5" width="2" height="2" fill="#fff"/><rect x="5.5" y="1.5" width="2" height="2" fill="#fff"/><rect x="9.5" y="1.5" width="2" height="2" fill="#fff"/>
<rect x="1" y="5" width="12" height="9" fill="#fff"/><rect x="4" y="6" width="4" height="1.5" fill="#f2a33a"/><rect x="5" y="6" width="1.5" height="7" fill="#3a78c0"/><rect x="7" y="11" width="6" height="2" fill="#3a78c0"/>
</svg>
<div class="t" style="left:261px;top:155px;color:#222;font-size:12px">绘图1</div>
<svg style="left:298px;top:156px" width="8" height="8" viewBox="0 0 8 8"><path d="M0 0 L8 8 M8 0 L0 8" stroke="#555" stroke-width="1.2"/></svg>
<div class="a" style="left:237px;top:171px;width:387px;height:17px;background:#fff;border-top:1px solid #dadada;border-bottom:1px solid #d0d0d0"></div>
<div class="a" style="left:237px;top:172px;width:16px;height:16px;background:#ebebeb"></div>
<div class="a" style="left:268px;top:172px;width:1px;height:15px;background:#d4d4d4"></div>
<div class="a" style="left:285px;top:181px;width:1px;height:6px;background:#dcdcdc"></div>
<div class="t" style="left:269px;top:173px;font-size:10px;color:#555;font-family:'Liberation Serif',serif">100</div>
<div class="a" style="left:303px;top:172px;width:1px;height:15px;background:#d4d4d4"></div>
<div class="a" style="left:321px;top:181px;width:1px;height:6px;background:#dcdcdc"></div>
<div class="t" style="left:304px;top:173px;font-size:10px;color:#555;font-family:'Liberation Serif',serif">110</div>
<div class="a" style="left:339px;top:172px;width:1px;height:15px;background:#d4d4d4"></div>
<div class="a" style="left:356px;top:181px;width:1px;height:6px;background:#dcdcdc"></div>
<div class="t" style="left:340px;top:173px;font-size:10px;color:#555;font-family:'Liberation Serif',serif">120</div>
<div class="a" style="left:374px;top:172px;width:1px;height:15px;background:#d4d4d4"></div>
<div class="a" style="left:392px;top:181px;width:1px;height:6px;background:#dcdcdc"></div>
<div class="t" style="left:375px;top:173px;font-size:10px;color:#555;font-family:'Liberation Serif',serif">130</div>
<div class="a" style="left:410px;top:172px;width:1px;height:15px;background:#d4d4d4"></div>
<div class="a" style="left:427px;top:181px;width:1px;height:6px;background:#dcdcdc"></div>
<div class="t" style="left:411px;top:173px;font-size:10px;color:#555;font-family:'Liberation Serif',serif">140</div>
<div class="a" style="left:445px;top:172px;width:1px;height:15px;background:#d4d4d4"></div>
<div class="a" style="left:463px;top:181px;width:1px;height:6px;background:#dcdcdc"></div>
<div class="t" style="left:446px;top:173px;font-size:10px;color:#555;font-family:'Liberation Serif',serif">150</div>
<div class="a" style="left:481px;top:172px;width:1px;height:15px;background:#d4d4d4"></div>
<div class="a" style="left:498px;top:181px;width:1px;height:6px;background:#dcdcdc"></div>
<div class="t" style="left:482px;top:173px;font-size:10px;color:#555;font-family:'Liberation Serif',serif">160</div>
<div class="a" style="left:516px;top:172px;width:1px;height:15px;background:#d4d4d4"></div>
<div class="a" style="left:534px;top:181px;width:1px;height:6px;background:#dcdcdc"></div>
<div class="t" style="left:517px;top:173px;font-size:10px;color:#555;font-family:'Liberation Serif',serif">170</div>
<div class="a" style="left:552px;top:172px;width:1px;height:15px;background:#d4d4d4"></div>
<div class="a" style="left:569px;top:181px;width:1px;height:6px;background:#dcdcdc"></div>
<div class="t" style="left:553px;top:173px;font-size:10px;color:#555;font-family:'Liberation Serif',serif">180</div>
<div class="a" style="left:587px;top:172px;width:1px;height:15px;background:#d4d4d4"></div>
<div class="a" style="left:605px;top:181px;width:1px;height:6px;background:#dcdcdc"></div>
<div class="t" style="left:588px;top:173px;font-size:10px;color:#555;font-family:'Liberation Serif',serif">190</div>
<div class="a" style="left:237px;top:188px;width:17px;height:412px;background:#fff;border-left:1px solid #dadada;border-right:1px solid #d0d0d0"></div>
<div class="a" style="left:247px;top:190px;width:6px;height:1px;background:#dcdcdc"></div>
<div class="a" style="left:238px;top:208px;width:15px;height:1px;background:#d4d4d4"></div>
<div class="a" style="left:247px;top:226px;width:6px;height:1px;background:#dcdcdc"></div>
<div class="t" style="left:239px;top:209px;width:10px;height:12px"><div style="position:absolute;left:0;top:11px;transform-origin:0 0;transform:rotate(-90deg);font-size:10px;color:#555;font-family:'Liberation Serif',serif;line-height:10px">50</div></div>
<div class="a" style="left:238px;top:244px;width:15px;height:1px;background:#d4d4d4"></div>
<div class="a" style="left:247px;top:261px;width:6px;height:1px;background:#dcdcdc"></div>
<div class="t" style="left:239px;top:245px;width:10px;height:12px"><div style="position:absolute;left:0;top:11px;transform-origin:0 0;transform:rotate(-90deg);font-size:10px;color:#555;font-family:'Liberation Serif',serif;line-height:10px">60</div></div>
<div class="a" style="left:238px;top:279px;width:15px;height:1px;background:#d4d4d4"></div>
<div class="a" style="left:247px;top:297px;width:6px;height:1px;background:#dcdcdc"></div>
<div class="t" style="left:239px;top:280px;width:10px;height:12px"><div style="position:absolute;left:0;top:11px;transform-origin:0 0;transform:rotate(-90deg);font-size:10px;color:#555;font-family:'Liberation Serif',serif;line-height:10px">70</div></div>
<div class="a" style="left:238px;top:314px;width:15px;height:1px;background:#d4d4d4"></div>
<div class="a" style="left:247px;top:332px;width:6px;height:1px;background:#dcdcdc"></div>
<div class="t" style="left:239px;top:315px;width:10px;height:12px"><div style="position:absolute;left:0;top:11px;transform-origin:0 0;transform:rotate(-90deg);font-size:10px;color:#555;font-family:'Liberation Serif',serif;line-height:10px">80</div></div>
<div class="a" style="left:238px;top:350px;width:15px;height:1px;background:#d4d4d4"></div>
<div class="a" style="left:247px;top:368px;width:6px;height:1px;background:#dcdcdc"></div>
<div class="t" style="left:239px;top:351px;width:10px;height:12px"><div style="position:absolute;left:0;top:11px;transform-origin:0 0;transform:rotate(-90deg);font-size:10px;color:#555;font-family:'Liberation Serif',serif;line-height:10px">90</div></div>
<div class="a" style="left:238px;top:386px;width:15px;height:1px;background:#d4d4d4"></div>
<div class="a" style="left:247px;top:403px;width:6px;height:1px;background:#dcdcdc"></div>
<div class="t" style="left:239px;top:387px;width:10px;height:17px"><div style="position:absolute;left:0;top:16px;transform-origin:0 0;transform:rotate(-90deg);font-size:10px;color:#555;font-family:'Liberation Serif',serif;line-height:10px">100</div></div>
<div class="a" style="left:238px;top:421px;width:15px;height:1px;background:#d4d4d4"></div>
<div class="a" style="left:247px;top:439px;width:6px;height:1px;background:#dcdcdc"></div>
<div class="t" style="left:239px;top:422px;width:10px;height:17px"><div style="position:absolute;left:0;top:16px;transform-origin:0 0;transform:rotate(-90deg);font-size:10px;color:#555;font-family:'Liberation Serif',serif;line-height:10px">110</div></div>
<div class="a" style="left:238px;top:456px;width:15px;height:1px;background:#d4d4d4"></div>
<div class="a" style="left:247px;top:474px;width:6px;height:1px;background:#dcdcdc"></div>
<div class="t" style="left:239px;top:457px;width:10px;height:17px"><div style="position:absolute;left:0;top:16px;transform-origin:0 0;transform:rotate(-90deg);font-size:10px;color:#555;font-family:'Liberation Serif',serif;line-height:10px">120</div></div>
<div class="a" style="left:238px;top:492px;width:15px;height:1px;background:#d4d4d4"></div>
<div class="a" style="left:247px;top:510px;width:6px;height:1px;background:#dcdcdc"></div>
<div class="t" style="left:239px;top:493px;width:10px;height:17px"><div style="position:absolute;left:0;top:16px;transform-origin:0 0;transform:rotate(-90deg);font-size:10px;color:#555;font-family:'Liberation Serif',serif;line-height:10px">130</div></div>
<div class="a" style="left:238px;top:528px;width:15px;height:1px;background:#d4d4d4"></div>
<div class="a" style="left:247px;top:545px;width:6px;height:1px;background:#dcdcdc"></div>
<div class="t" style="left:239px;top:529px;width:10px;height:17px"><div style="position:absolute;left:0;top:16px;transform-origin:0 0;transform:rotate(-90deg);font-size:10px;color:#555;font-family:'Liberation Serif',serif;line-height:10px">140</div></div>
<div class="a" style="left:238px;top:563px;width:15px;height:1px;background:#d4d4d4"></div>
<div class="a" style="left:247px;top:581px;width:6px;height:1px;background:#dcdcdc"></div>
<div class="t" style="left:239px;top:564px;width:10px;height:17px"><div style="position:absolute;left:0;top:16px;transform-origin:0 0;transform:rotate(-90deg);font-size:10px;color:#555;font-family:'Liberation Serif',serif;line-height:10px">150</div></div>
<div class="a" style="left:238px;top:598px;width:15px;height:1px;background:#d4d4d4"></div><!-- page -->
<div class="a" style="left:320px;top:190px;width:297px;height:355px;background:#3697dc"></div>
<!-- vertical scrollbar -->
<div class="a" style="left:624px;top:172px;width:16px;height:428px;background:#ebebeb"></div>
<div class="a" style="left:624px;top:172px;width:16px;height:17px;background:#fff;border:1px solid #cfcfcf"></div>
<div class="arr" style="left:628px;top:178px;border-left-width:4px;border-right-width:4px;border-top:none;border-bottom:4px solid #555"></div>
<div class="a" style="left:624px;top:304px;width:16px;height:152px;background:#fff;border:1px solid #cfcfcf"></div>
<div class="a" style="left:624px;top:583px;width:16px;height:17px;background:#fff;border:1px solid #cfcfcf"></div>
<div class="arr" style="left:628px;top:589px;border-left-width:4px;border-right-width:4px;border-top-width:4px;border-top-color:#555"></div>
<svg style="left:615px;top:584px" width="9" height="9" viewBox="0 0 9 9"><path d="M4.5 0 V9 M0 4.5 H9" stroke="#4a80c8" stroke-width="1"/><circle cx="4.5" cy="4.5" r="1.5" fill="none" stroke="#4a80c8"/></svg>
<!-- horizontal scrollbar -->
<div class="a" style="left:237px;top:600px;width:403px;height:16px;background:#ebebeb"></div>
<div class="a" style="left:237px;top:600px;width:17px;height:16px;background:#fff;border:1px solid #cfcfcf"></div>
<div class="arr" style="left:243px;top:604px;border-top:4px solid transparent;border-bottom:4px solid transparent;border-left:none;border-right:4px solid #555"></div>
<div class="a" style="left:383px;top:600px;width:93px;height:16px;background:#fff;border:1px solid #cfcfcf"></div>
<div class="a" style="left:607px;top:600px;width:17px;height:16px;background:#fff;border:1px solid #cfcfcf"></div>
<div class="arr" style="left:613px;top:604px;border-top:4px solid transparent;border-bottom:4px solid transparent;border-right:none;border-left:4px solid #555"></div>

<!-- page bar -->
<svg style="left:242px;top:623px" width="12" height="8" viewBox="0 0 12 8"><path d="M1 7 L6 2 L11 7" fill="none" stroke="#3a6fb5" stroke-width="2"/></svg>
<div class="vl" style="left:262px;top:621px;height:12px;background:#999"></div>
<div class="t" style="left:264px;top:621px;color:#222">页-1</div>
<div class="arr" style="left:366px;top:626px;border-top-color:#666"></div>
<div class="vl" style="left:377px;top:621px;height:12px;background:#bbb"></div>
<svg style="left:384px;top:621px" width="13" height="13" viewBox="0 0 13 13"><path d="M6.5 0 V13 M0 6.5 H13" stroke="#1a9a4a" stroke-width="2.4"/></svg>
<div class="vl" style="left:404px;top:621px;height:12px;background:#bbb"></div>
<div class="t" style="left:419px;top:621px;color:#3a6fb5;font-weight:bold">页-1</div>
<div class="t" style="left:238px;top:638px;color:#222">填充</div>
<svg style="left:398.6px;top:217px" width="23.5" height="21.5" viewBox="0 0 23.5 21.5"><path d="M0 0 H23.5 V21.5 L11.75 16.5 L0 21.5 Z" fill="#e8333c"/><rect x="0" y="0" width="23.5" height="2" fill="#fff" opacity=".35"/><path d="M0 11.825000000000001 H23.5 V21.5 L11.75 16.5 L0 21.5 Z" fill="#c81e2a" opacity=".35"/><text x="11.75" y="14.5" text-anchor="middle" font-family="Liberation Sans" font-weight="bold" font-size="11" fill="#fff">H</text></svg>
<svg style="left:426.7px;top:217px" width="23.5" height="21.5" viewBox="0 0 23.5 21.5"><path d="M0 0 H23.5 V21.5 L11.75 16.5 L0 21.5 Z" fill="#22a8e2"/><rect x="0" y="0" width="23.5" height="2" fill="#fff" opacity=".35"/><path d="M0 11.825000000000001 H23.5 V21.5 L11.75 16.5 L0 21.5 Z" fill="#1a98d2" opacity=".35"/><text x="11.75" y="14.5" text-anchor="middle" font-family="Liberation Sans" font-weight="bold" font-size="11" fill="#fff">A</text></svg>
<svg style="left:454.0px;top:217px" width="23.5" height="21.5" viewBox="0 0 23.5 21.5"><path d="M0 0 H23.5 V21.5 L11.75 16.5 L0 21.5 Z" fill="#f8c45a"/><rect x="0" y="0" width="23.5" height="2" fill="#fff" opacity=".35"/><path d="M0 11.825000000000001 H23.5 V21.5 L11.75 16.5 L0 21.5 Z" fill="#f0b040" opacity=".35"/><text x="11.75" y="14.5" text-anchor="middle" font-family="Liberation Sans" font-weight="bold" font-size="11" fill="#fff">P</text></svg>
<svg style="left:482.0px;top:217px" width="23.5" height="21.5" viewBox="0 0 23.5 21.5"><path d="M0 0 H23.5 V21.5 L11.75 16.5 L0 21.5 Z" fill="#5cbcb0"/><rect x="0" y="0" width="23.5" height="2" fill="#fff" opacity=".35"/><path d="M0 11.825000000000001 H23.5 V21.5 L11.75 16.5 L0 21.5 Z" fill="#4aaa9e" opacity=".35"/><text x="11.75" y="14.5" text-anchor="middle" font-family="Liberation Sans" font-weight="bold" font-size="11" fill="#fff">P</text></svg>
<svg style="left:509.0px;top:217px" width="23.5" height="21.5" viewBox="0 0 23.5 21.5"><path d="M0 0 H23.5 V21.5 L11.75 16.5 L0 21.5 Z" fill="#e4566a"/><rect x="0" y="0" width="23.5" height="2" fill="#fff" opacity=".35"/><path d="M0 11.825000000000001 H23.5 V21.5 L11.75 16.5 L0 21.5 Z" fill="#d84058" opacity=".35"/><text x="11.75" y="14.5" text-anchor="middle" font-family="Liberation Sans" font-weight="bold" font-size="11" fill="#fff">Y</text></svg>
<svg style="left:365.0px;top:247px" width="23.5" height="21.5" viewBox="0 0 23.5 21.5"><path d="M0 0 H23.5 V21.5 L11.75 16.5 L0 21.5 Z" fill="#e8333c"/><rect x="0" y="0" width="23.5" height="2" fill="#fff" opacity=".35"/><path d="M0 11.825000000000001 H23.5 V21.5 L11.75 16.5 L0 21.5 Z" fill="#c81e2a" opacity=".35"/><text x="11.75" y="14.5" text-anchor="middle" font-family="Liberation Sans" font-weight="bold" font-size="11" fill="#fff">B</text></svg>
<svg style="left:392.0px;top:247px" width="23.5" height="21.5" viewBox="0 0 23.5 21.5"><path d="M0 0 H23.5 V21.5 L11.75 16.5 L0 21.5 Z" fill="#5cbcb0"/><rect x="0" y="0" width="23.5" height="2" fill="#fff" opacity=".35"/><path d="M0 11.825000000000001 H23.5 V21.5 L11.75 16.5 L0 21.5 Z" fill="#4aaa9e" opacity=".35"/><text x="11.75" y="14.5" text-anchor="middle" font-family="Liberation Sans" font-weight="bold" font-size="11" fill="#fff">I</text></svg>
<svg style="left:420.0px;top:247px" width="23.5" height="21.5" viewBox="0 0 23.5 21.5"><path d="M0 0 H23.5 V21.5 L11.75 16.5 L0 21.5 Z" fill="#f8c45a"/><rect x="0" y="0" width="23.5" height="2" fill="#fff" opacity=".35"/><path d="M0 11.825000000000001 H23.5 V21.5 L11.75 16.5 L0 21.5 Z" fill="#f0b040" opacity=".35"/><text x="11.75" y="14.5" text-anchor="middle" font-family="Liberation Sans" font-weight="bold" font-size="11" fill="#fff">R</text></svg>
<svg style="left:447.0px;top:247px" width="23.5" height="21.5" viewBox="0 0 23.5 21.5"><path d="M0 0 H23.5 V21.5 L11.75 16.5 L0 21.5 Z" fill="#22a8e2"/><rect x="0" y="0" width="23.5" height="2" fill="#fff" opacity=".35"/><path d="M0 11.825000000000001 H23.5 V21.5 L11.75 16.5 L0 21.5 Z" fill="#1a98d2" opacity=".35"/><text x="11.75" y="14.5" text-anchor="middle" font-family="Liberation Sans" font-weight="bold" font-size="11" fill="#fff">T</text></svg>
<svg style="left:475.0px;top:247px" width="23.5" height="21.5" viewBox="0 0 23.5 21.5"><path d="M0 0 H23.5 V21.5 L11.75 16.5 L0 21.5 Z" fill="#a488c8"/><rect x="0" y="0" width="23.5" height="2" fill="#fff" opacity=".35"/><path d="M0 11.825000000000001 H23.5 V21.5 L11.75 16.5 L0 21.5 Z" fill="#9676bc" opacity=".35"/><text x="11.75" y="14.5" text-anchor="middle" font-family="Liberation Sans" font-weight="bold" font-size="11" fill="#fff">H</text></svg>
<svg style="left:502.0px;top:247px" width="23.5" height="21.5" viewBox="0 0 23.5 21.5"><path d="M0 0 H23.5 V21.5 L11.75 16.5 L0 21.5 Z" fill="#e8333c"/><rect x="0" y="0" width="23.5" height="2" fill="#fff" opacity=".35"/><path d="M0 11.825000000000001 H23.5 V21.5 L11.75 16.5 L0 21.5 Z" fill="#c81e2a" opacity=".35"/><text x="11.75" y="14.5" text-anchor="middle" font-family="Liberation Sans" font-weight="bold" font-size="11" fill="#fff">D</text></svg>
<svg style="left:530.0px;top:247px" width="23.5" height="21.5" viewBox="0 0 23.5 21.5"><path d="M0 0 H23.5 V21.5 L11.75 16.5 L0 21.5 Z" fill="#22a8e2"/><rect x="0" y="0" width="23.5" height="2" fill="#fff" opacity=".35"/><path d="M0 11.825000000000001 H23.5 V21.5 L11.75 16.5 L0 21.5 Z" fill="#1a98d2" opacity=".35"/><text x="11.75" y="14.5" text-anchor="middle" font-family="Liberation Sans" font-weight="bold" font-size="11" fill="#fff">A</text></svg>
<svg style="left:557.0px;top:247px" width="23.5" height="21.5" viewBox="0 0 23.5 21.5"><path d="M0 0 H23.5 V21.5 L11.75 16.5 L0 21.5 Z" fill="#f8c45a"/><rect x="0" y="0" width="23.5" height="2" fill="#fff" opacity=".35"/><path d="M0 11.825000000000001 H23.5 V21.5 L11.75 16.5 L0 21.5 Z" fill="#f0b040" opacity=".35"/><text x="11.75" y="14.5" text-anchor="middle" font-family="Liberation Sans" font-weight="bold" font-size="11" fill="#fff">Y</text></svg>
<svg style="left:430px;top:310px" width="66" height="80" viewBox="0 0 66 80">
<defs><pattern id="cup" x="1" width="4.6" height="50" patternUnits="userSpaceOnUse"><rect width="4.6" height="50" fill="#f7b62e"/><rect x="0" width="1.5" height="50" fill="#fcd36e"/></pattern></defs>
<path d="M3 30 Q3 14 14 14 H51 Q62 14 62 30 Z" fill="#f5d29c"/>
<rect x="2" y="27" width="61" height="13" rx="6" fill="#e9a595"/>
<path d="M5 24 A27.5 23 0 0 1 60 24 Q61 29 58 29 Q55 29 55 25 Q53 22 50 25 L50 29 Q47 33 44 29 L44 25 Q42 22 39 25 L39 31 Q36 35 33 31 L33 25 Q31 22 28 25 L28 30 Q25 34 22 30 L22 25 Q20 22 17 25 L17 29 Q14 33 11 29 L11 26 Q8 23 5 26 Z" fill="#fff"/>
<path d="M1 37 H64 L59 75 Q58 79 54 79 H11 Q7 79 6 75 Z" fill="url(#cup)"/>
<path d="M5 39 H61" stroke="#7a4028" stroke-width="1.5" stroke-dasharray="1.5 2.4"/>
<g stroke-width="1.4" stroke-linecap="round"><path d="M20 8 L23 10" stroke="#e86a8a"/><path d="M30 6 L33 5" stroke="#f2a33a"/><path d="M40 9 L42 12" stroke="#4ab0e0"/><path d="M26 14 L29 15" stroke="#6fcf8e"/><path d="M46 14 L49 13" stroke="#e86a8a"/><path d="M15 15 L17 12" stroke="#f2a33a"/><path d="M36 16 L38 14" stroke="#a184c8"/></g>
</svg>
<svg style="left:405px;top:450px" width="115" height="65" viewBox="0 0 115 65">
<g transform="skewX(-12)" font-family="Liberation Serif" font-weight="bold" font-style="italic" fill="#e0505c" stroke="#e0505c" stroke-width="1.3" stroke-linejoin="round">
<text x="63" y="28" text-anchor="middle" font-size="28" textLength="64" lengthAdjust="spacingAndGlyphs">Happy</text>
<text x="67" y="56" text-anchor="middle" font-size="27" textLength="96" lengthAdjust="spacingAndGlyphs">Birthday!</text>
</g></svg><div class="a" style="left:262.00px;top:637px;width:3px;height:11px;background:#8a1020"></div>
<div class="a" style="left:265.75px;top:637px;width:3px;height:11px;background:#d82030"></div>
<div class="a" style="left:269.50px;top:637px;width:3px;height:11px;background:#c04060"></div>
<div class="a" style="left:273.25px;top:637px;width:3px;height:11px;background:#e05060"></div>
<div class="a" style="left:277.00px;top:637px;width:3px;height:11px;background:#f07080"></div>
<div class="a" style="left:280.75px;top:637px;width:3px;height:11px;background:#e06090"></div>
<div class="a" style="left:284.50px;top:637px;width:3px;height:11px;background:#e8a0b8"></div>
<div class="a" style="left:288.25px;top:637px;width:3px;height:11px;background:#d09090"></div>
<div class="a" style="left:292.00px;top:637px;width:3px;height:11px;background:#e0a0a0"></div>
<div class="a" style="left:295.75px;top:637px;width:3px;height:11px;background:#f0a890"></div>
<div class="a" style="left:299.50px;top:637px;width:3px;height:11px;background:#f0b8a0"></div>
<div class="a" style="left:303.25px;top:637px;width:3px;height:11px;background:#f8d0c8"></div>
<div class="a" style="left:307.00px;top:637px;width:3px;height:11px;background:#f0d8e8"></div>
<div class="a" style="left:310.75px;top:637px;width:3px;height:11px;background:#f8e0e8"></div>
<div class="a" style="left:314.50px;top:637px;width:3px;height:11px;background:#fff0f0"></div>
<div class="a" style="left:319.00px;top:637px;width:3px;height:11px;background:#102050"></div>
<div class="a" style="left:322.75px;top:637px;width:3px;height:11px;background:#203a8a"></div>
<div class="a" style="left:326.50px;top:637px;width:3px;height:11px;background:#203070"></div>
<div class="a" style="left:330.25px;top:637px;width:3px;height:11px;background:#504090"></div>
<div class="a" style="left:334.00px;top:637px;width:3px;height:11px;background:#2050a0"></div>
<div class="a" style="left:337.75px;top:637px;width:3px;height:11px;background:#3070c0"></div>
<div class="a" style="left:341.50px;top:637px;width:3px;height:11px;background:#3a88c8"></div>
<div class="a" style="left:345.25px;top:637px;width:3px;height:11px;background:#40a0e0"></div>
<div class="a" style="left:349.00px;top:637px;width:3px;height:11px;background:#50b0e8"></div>
<div class="a" style="left:352.75px;top:637px;width:3px;height:11px;background:#60c0f0"></div>
<div class="a" style="left:356.50px;top:637px;width:3px;height:11px;background:#80d0f0"></div>
<div class="a" style="left:360.25px;top:637px;width:3px;height:11px;background:#a0d8f0"></div>
<div class="a" style="left:364.00px;top:637px;width:3px;height:11px;background:#c0e4f4"></div>
<div class="a" style="left:367.75px;top:637px;width:3px;height:11px;background:#d8ecf8"></div>
<div class="a" style="left:371.50px;top:637px;width:3px;height:11px;background:#eef6fc"></div>
<div class="a" style="left:375.00px;top:637px;width:3px;height:11px;background:#0a3a2a"></div>
<div class="a" style="left:378.75px;top:637px;width:3px;height:11px;background:#0a5a3a"></div>
<div class="a" style="left:382.50px;top:637px;width:3px;height:11px;background:#107a4a"></div>
<div class="a" style="left:386.25px;top:637px;width:3px;height:11px;background:#209a5a"></div>
<div class="a" style="left:390.00px;top:637px;width:3px;height:11px;background:#30aa6a"></div>
<div class="a" style="left:393.75px;top:637px;width:3px;height:11px;background:#40b070"></div>
<div class="a" style="left:397.50px;top:637px;width:3px;height:11px;background:#50c090"></div>
<div class="a" style="left:401.25px;top:637px;width:3px;height:11px;background:#60d0a0"></div>
<div class="a" style="left:405.00px;top:637px;width:3px;height:11px;background:#80d8b0"></div>
<div class="a" style="left:408.75px;top:637px;width:3px;height:11px;background:#90d890"></div>
<div class="a" style="left:412.50px;top:637px;width:3px;height:11px;background:#a8d870"></div>
<div class="a" style="left:416.25px;top:637px;width:3px;height:11px;background:#c0e080"></div>
<div class="a" style="left:420.00px;top:637px;width:3px;height:11px;background:#d0e8a0"></div>
<div class="a" style="left:423.75px;top:637px;width:3px;height:11px;background:#e0f0c0"></div>
<div class="a" style="left:427.50px;top:637px;width:3px;height:11px;background:#f4f8e8"></div>
<div class="a" style="left:431.00px;top:637px;width:3px;height:11px;background:#e06a10"></div>
<div class="a" style="left:434.75px;top:637px;width:3px;height:11px;background:#e88020"></div>
<div class="a" style="left:438.50px;top:637px;width:3px;height:11px;background:#f09a30"></div>
<div class="a" style="left:442.25px;top:637px;width:3px;height:11px;background:#f0aa30"></div>
<div class="a" style="left:446.00px;top:637px;width:3px;height:11px;background:#f5b830"></div>
<div class="a" style="left:449.75px;top:637px;width:3px;height:11px;background:#f8c830"></div>
<div class="a" style="left:453.50px;top:637px;width:3px;height:11px;background:#fad830"></div>
<div class="a" style="left:457.25px;top:637px;width:3px;height:11px;background:#fce040"></div>
<div class="a" style="left:461.00px;top:637px;width:3px;height:11px;background:#fde860"></div>
<div class="a" style="left:464.75px;top:637px;width:3px;height:11px;background:#fce890"></div>
<div class="a" style="left:468.50px;top:637px;width:3px;height:11px;background:#fcefb0"></div>
<div class="a" style="left:472.25px;top:637px;width:3px;height:11px;background:#f8e8c0"></div>
<div class="a" style="left:476.00px;top:637px;width:3px;height:11px;background:#f8f0d8"></div>
<div class="a" style="left:479.75px;top:637px;width:3px;height:11px;background:#fdf8ee"></div>
<div class="a" style="left:487.00px;top:637px;width:3px;height:11px;background:#5a3a8a"></div>
<div class="a" style="left:490.75px;top:637px;width:3px;height:11px;background:#7050a0"></div>
<div class="a" style="left:494.50px;top:637px;width:3px;height:11px;background:#8060b0"></div>
<div class="a" style="left:498.25px;top:637px;width:3px;height:11px;background:#9070c0"></div>
<div class="a" style="left:502.00px;top:637px;width:3px;height:11px;background:#a080c8"></div>
<div class="a" style="left:505.75px;top:637px;width:3px;height:11px;background:#b090d0"></div>
<div class="a" style="left:509.50px;top:637px;width:3px;height:11px;background:#c0a0d8"></div>
<div class="a" style="left:513.25px;top:637px;width:3px;height:11px;background:#d0b0e0"></div>
<div class="a" style="left:517.00px;top:637px;width:3px;height:11px;background:#e0c0e8"></div>
<div class="a" style="left:520.75px;top:637px;width:3px;height:11px;background:#f0d8f0"></div>
<div class="a" style="left:525.00px;top:637px;width:3px;height:11px;background:#4a2010"></div>
<div class="a" style="left:528.75px;top:637px;width:3px;height:11px;background:#6a3010"></div>
<div class="a" style="left:532.50px;top:637px;width:3px;height:11px;background:#8a4a20"></div>
<div class="a" style="left:536.25px;top:637px;width:3px;height:11px;background:#a06030"></div>
<div class="a" style="left:540.00px;top:637px;width:3px;height:11px;background:#b07040"></div>
<div class="a" style="left:543.75px;top:637px;width:3px;height:11px;background:#c08050"></div>
<div class="a" style="left:547.50px;top:637px;width:3px;height:11px;background:#d0a070"></div>
<div class="a" style="left:551.25px;top:637px;width:3px;height:11px;background:#e0c0a0"></div>
<div class="a" style="left:555.00px;top:637px;width:3px;height:11px;background:#f0e0d0"></div>
<div class="a" style="left:557.00px;top:637px;width:3px;height:11px;background:#101010"></div>
<div class="a" style="left:560.75px;top:637px;width:3px;height:11px;background:#303030"></div>
<div class="a" style="left:564.50px;top:637px;width:3px;height:11px;background:#505050"></div>
<div class="a" style="left:568.25px;top:637px;width:3px;height:11px;background:#686868"></div>
<div class="a" style="left:572.00px;top:637px;width:3px;height:11px;background:#808080"></div>
<div class="a" style="left:575.75px;top:637px;width:3px;height:11px;background:#909090"></div>
<div class="a" style="left:579.50px;top:637px;width:3px;height:11px;background:#a0a0a0"></div>
<div class="a" style="left:583.25px;top:637px;width:3px;height:11px;background:#b0b0b0"></div>
<div class="a" style="left:587.00px;top:637px;width:3px;height:11px;background:#c0c0c0"></div>
<div class="a" style="left:590.75px;top:637px;width:3px;height:11px;background:#d0d0d0"></div><!-- ===== RIGHT PANEL ===== -->
<div class="t" style="left:648px;top:155px;font-size:14px;color:#444">填充</div>
<div class="vl" style="left:673px;top:172px;height:476px;background:#d8d8d8"></div>
<svg style="left:981px;top:157px" width="10" height="10" viewBox="0 0 10 10"><path d="M0 0 L10 10 M10 0 L0 10" stroke="#555" stroke-width="1.3"/></svg>
<!-- icon strip -->
<div class="a" style="left:645px;top:172px;width:28px;height:28px;background:#b7c8de"></div>
<svg style="left:650px;top:175px" width="20" height="23" viewBox="0 0 20 23">
<path d="M6 2 V6" stroke="#777" stroke-width="1.2"/><circle cx="6" cy="2" r="1.5" fill="none" stroke="#777"/>
<path d="M1 9 L7 5 L12 10 L7 15 Z" fill="#eee" stroke="#888" stroke-width=".8"/>
<path d="M10 5 Q18 6 17 14 L13 14 Z" fill="#e86a9a"/>
<rect x="1" y="18" width="19" height="4" fill="#000"/>
</svg>
<svg style="left:650px;top:208px" width="19" height="19" viewBox="0 0 19 19">
<path d="M.5 15 V3.5 H11" fill="none" stroke="#2f5f9a" stroke-width="1.2"/>
<path d="M8 13 L16 1 L18 3 L10 14 Z" fill="#f2c35a"/>
<rect x="0" y="15" width="17" height="3.5" fill="#000"/>
</svg>
<div class="a" style="left:650px;top:239px;width:18px;height:18px;background:#6cc6be;border-radius:1px"></div>
<svg style="left:650px;top:272px" width="18" height="16" viewBox="0 0 18 16">
<rect x=".5" y=".5" width="17" height="15" fill="#fff" stroke="#9ab"/>
<path d="M0 16 V9 L5 5 L9 9 L13 6 L18 10 V16 Z" fill="#3a6fb5"/><circle cx="14" cy="3.5" r="1.5" fill="#f2a33a"/>
</svg>
<div class="a" style="left:650px;top:300px;width:13px;height:13px;background:#3a6fb5"></div>
<div class="a" style="left:654px;top:305px;width:14px;height:15px;background:#f0c878"></div>
<svg style="left:651px;top:332px" width="17" height="20" viewBox="0 0 17 20">
<path d="M.5 .5 H12 L16.5 5 V19.5 H.5 Z" fill="#fff" stroke="#3a6fb5"/>
<path d="M5 6 H14 M5 9.5 H14 M5 13 H14 M5 16.5 H14" stroke="#3a6fb5" stroke-width="1.5"/>
<path d="M2 6 H4 M2 9.5 H4 M2 13 H4 M2 16.5 H4" stroke="#e05060" stroke-width="1.5"/>
</svg>
<svg style="left:650px;top:362px" width="19" height="20" viewBox="0 0 19 20">
<circle cx="8" cy="8" r="8" fill="#3a6fb5"/><path d="M3 5 Q6 3 8 6 Q10 10 6 12 Q4 8 3 5 Z M10 2 Q14 4 13 8" fill="#fff" opacity=".8"/>
<rect x="8" y="14" width="11" height="5" rx="2.5" fill="none" stroke="#f2a33a" stroke-width="1.8"/>
</svg>
<svg style="left:651px;top:393px" width="16" height="21" viewBox="0 0 16 21">
<path d="M.5 .5 H10 L15.5 6 V20.5 H.5 Z" fill="#fff" stroke="#3a6fb5"/>
<path d="M4 15 L10 8 Q12 6 11 10 L6 16" fill="none" stroke="#3a6fb5" stroke-width="1.3"/>
</svg>
<svg style="left:650px;top:425px" width="19" height="18" viewBox="0 0 19 18">
<path d="M2 .75 H17 Q18.25 .75 18.25 2 V11 Q18.25 12.25 17 12.25 H8 L4 17 V12.25 H2 Q.75 12.25 .75 11 V2 Q.75 .75 2 .75 Z" fill="#fff" stroke="#3a6fb5" stroke-width="1.5"/>
<circle cx="5.5" cy="6.5" r="1.4" fill="#3a6fb5"/><circle cx="9.5" cy="6.5" r="1.4" fill="#3a6fb5"/><circle cx="13.5" cy="6.5" r="1.4" fill="#3a6fb5"/>
</svg>
<svg style="left:650px;top:456px" width="18" height="18" viewBox="0 0 18 18">
<circle cx="9" cy="9" r="9" fill="#2f65a8"/>
<path d="M6 7 Q6 4 9 4 Q12 4 12 6.5 Q12 8 10 9 Q9 9.6 9 11" fill="none" stroke="#fff" stroke-width="2.2"/>
<circle cx="9" cy="14" r="1.3" fill="#fff"/>
</svg>

<!-- options box -->
<div class="a" style="left:680px;top:178px;width:297px;height:159px;border:1px solid #ececec;background:#fff"></div>
<div class="a" style="left:688px;top:191px;width:10px;height:10px;border-radius:50%;border:1px solid #f0f0f0"></div>
<div class="a" style="left:688px;top:215px;width:10px;height:10px;border-radius:50%;border:1px solid #f0f0f0"></div>
<div class="a" style="left:692px;top:219px;width:3px;height:3px;border-radius:50%;background:#aaa"></div>
<div class="a" style="left:688px;top:240px;width:10px;height:10px;border-radius:50%;border:1px solid #f0f0f0"></div>
<div class="a" style="left:688px;top:264px;width:10px;height:10px;border-radius:50%;border:1px solid #f0f0f0"></div>
<div class="a" style="left:688px;top:289px;width:10px;height:10px;border-radius:50%;border:1px solid #f0f0f0"></div>
<div class="a" style="left:688px;top:313px;width:10px;height:10px;border-radius:50%;border:1px solid #f0f0f0"></div>
<div class="t g" style="left:704px;top:191px">无填充</div>
<div class="t g" style="left:704px;top:215px">单色填充</div>
<div class="t g" style="left:704px;top:240px">渐变填充</div>
<div class="t g" style="left:704px;top:264px">单色渐变填充</div>
<div class="t g" style="left:704px;top:289px">图案填充</div>
<div class="t g" style="left:704px;top:313px">图片或纹理填充</div>

<div class="t g" style="left:688px;top:357px">颜色：</div>
<div class="a" style="left:919px;top:352px;width:60px;height:21px;border:1px solid #d4d4d4;background:#fff"></div>
<div class="a" style="left:925px;top:357px;width:44px;height:11px;background:#d8d8d8"></div>
<div class="arrg" style="left:971px;top:362px;border-left-width:2px;border-right-width:2px;border-top-width:2px"></div>

<div class="t g" style="left:688px;top:389px">亮度：</div>
<div class="a" style="left:743px;top:394px;width:84px;height:1px;background:#777"></div>
<div class="a" style="left:827px;top:394px;width:83px;height:1px;background:#d8d8d8"></div>
<div class="a" style="left:822px;top:390px;width:9px;height:9px;border-radius:50%;background:#7fa4e8"></div>
<div class="a" style="left:919px;top:384px;width:60px;height:21px;border:1px solid #d4d4d4;background:#fff"></div>
<div class="t g" style="left:922px;top:388px;font-size:13px">0 %</div>
<div class="arr" style="left:969px;top:386px;border-left-width:2.5px;border-right-width:2.5px;border-top:none;border-bottom:3px solid #555"></div>
<div class="arr" style="left:969px;top:397px;border-left-width:2.5px;border-right-width:2.5px;border-top-width:3px;border-top-color:#555"></div>

<div class="t g" style="left:688px;top:421px">透明度：</div>
<div class="a" style="left:743px;top:426px;width:167px;height:1px;background:#d8d8d8"></div>
<div class="a" style="left:742px;top:422px;width:9px;height:9px;border-radius:50%;background:#7fa4e8"></div>
<div class="a" style="left:919px;top:415px;width:60px;height:21px;border:1px solid #d4d4d4;background:#fff"></div>
<div class="t g" style="left:922px;top:419px;font-size:13px">0 %</div>
<div class="arr" style="left:969px;top:418px;border-left-width:2.5px;border-right-width:2.5px;border-top:none;border-bottom:3px solid #555"></div>
<div class="arr" style="left:969px;top:429px;border-left-width:2.5px;border-right-width:2.5px;border-top-width:3px;border-top-color:#555"></div>

<!-- right scrollbar -->
<div class="a" style="left:982px;top:173px;width:16px;height:475px;background:#fff;border-left:1px solid #cfcfcf;border-right:1px solid #cfcfcf"></div>
<div class="a" style="left:982px;top:173px;width:16px;height:16px;border:1px solid #cfcfcf"></div>
<div class="arr" style="left:986px;top:179px;border-left-width:4px;border-right-width:4px;border-top:none;border-bottom:4px solid #555"></div>
<div class="a" style="left:982px;top:631px;width:16px;height:17px;border:1px solid #cfcfcf"></div>
<div class="arr" style="left:986px;top:638px;border-left-width:4px;border-right-width:4px;border-top-width:4px;border-top-color:#555"></div>
</body></html>
